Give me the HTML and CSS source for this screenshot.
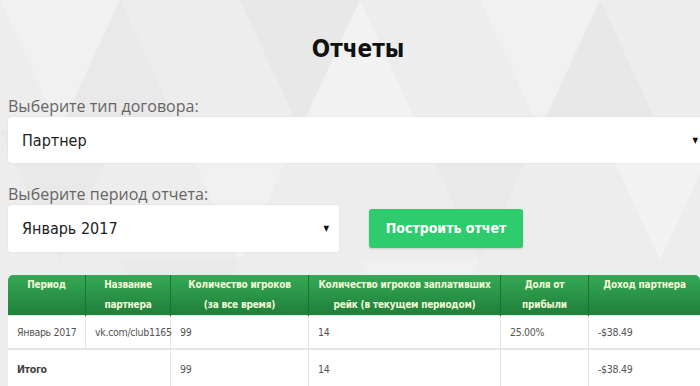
FILE: index.html
```html
<!DOCTYPE html>
<html lang="ru">
<head>
    <meta charset="UTF-8">
    <title>Отчеты</title>
    <link rel="stylesheet" href="styles.css">
</head>
<body>
    <svg class="bg" width="720" height="400" viewBox="0 0 720 400">
        <polygon points="0,0 120,0 60,130" fill="#f1f1f1"/>
        <polygon points="60,130 180,130 120,0" fill="#e9e9e9"/>
        <polygon points="240,0 360,0 300,130" fill="#e8e8e8"/>
        <polygon points="300,130 420,130 360,0" fill="#f2f2f2"/>
        <polygon points="480,0 600,0 540,130" fill="#f1f1f1"/>
        <polygon points="540,130 660,130 600,0" fill="#e8e8e8"/>
        <polygon points="0,130 120,130 60,260" fill="#e9e9e9"/>
        <polygon points="180,130 300,130 240,260" fill="#f1f1f1"/>
        <polygon points="420,130 540,130 480,260" fill="#e9e9e9"/>
        <polygon points="600,130 720,130 660,260" fill="#f2f2f2"/>
        <polygon points="120,260 240,260 180,400" fill="#e9e9e9"/>
        <polygon points="360,260 480,260 420,400" fill="#f1f1f1"/>
    </svg>
    <div class="page">
        <h1 class="title">Отчеты</h1>

        <label class="label">Выберите тип договора:</label>
        <div class="select wide">
            <span>Партнер</span>
            <span class="arrow">&#9660;</span>
        </div>

        <label class="label">Выберите период отчета:</label>
        <div class="period">
            <div class="select short">
                <span>Январь 2017</span>
                <span class="arrow">&#9660;</span>
            </div>
            <div class="btn">Построить отчет</div>
        </div>

        <table class="report">
            <thead>
                <tr>
                    <th class="c1">Период</th>
                    <th class="c2">Название партнера</th>
                    <th class="c3">Количество игроков<br>(за все время)</th>
                    <th class="c4">Количество игроков заплативших<br>рейк (в текущем периодом)</th>
                    <th class="c5">Доля от<br>прибыли</th>
                    <th class="c6">Доход партнера</th>
                </tr>
            </thead>
            <tbody>
                <tr>
                    <td>Январь 2017</td>
                    <td><div class="clip">vk.com/club11653</div></td>
                    <td>99</td>
                    <td>14</td>
                    <td>25.00%</td>
                    <td>-$38.49</td>
                </tr>
                <tr class="total">
                    <td colspan="2">Итого</td>
                    <td>99</td>
                    <td>14</td>
                    <td></td>
                    <td>-$38.49</td>
                </tr>
            </tbody>
        </table>
    </div>
</body>
</html>
```

FILE: styles.css
```css
html,body{
    margin: 0;
    padding: 0;
}
body{
    background: #ededed;
    overflow: hidden;
    font-family: "Open Sans", sans-serif;
    position: relative;
    height: 386px;
}
.bg{
    position: absolute;
    left: 0;
    top: 0;
    z-index: 0;
}
.page{
    position: relative;
    z-index: 1;
    width: 700px;
    margin-left: 8px;
    display: flex;
    flex-direction: column;
}
.title,
.select,
.btn,
.report{
    font-family: "DejaVu Sans", sans-serif;
    font-stretch: condensed;
}
.title{
    margin: 29px 0 0;
    height: 40px;
    line-height: 40px;
    text-align: center;
    font-weight: bold;
    font-size: 24px;
    color: #111;
}
.label{
    margin-top: 26px;
    font-size: 16px;
    line-height: 22px;
    color: #666;
}
.label + .select{
    margin-top: 0;
}
.select{
    background: #fff;
    border-radius: 3px;
    box-shadow: 0 0 2px rgba(0,0,0,0.08);
    display: flex;
    align-items: center;
    justify-content: space-between;
    padding: 0 10px 0 14px;
    font-size: 16px;
    color: #222;
}
.wide{
    height: 46px;
}
.short{
    width: 307px;
    height: 47px;
}
.arrow{
    font-size: 8px;
    color: #111;
}
.wide + .label{
    margin-top: 20px;
}
.period{
    margin-top: 0;
    display: flex;
    align-items: center;
    gap: 30px;
}
.btn{
    width: 154px;
    height: 39px;
    line-height: 39px;
    text-align: center;
    background: #2ecc6c;
    border-radius: 3px;
    box-shadow: 0 1px 2px rgba(0,0,0,0.15);
    color: #fff;
    font-weight: bold;
    font-size: 14px;
}
.report{
    margin-top: 23px;
    width: 692px;
    border-collapse: collapse;
    table-layout: fixed;
    background: #fff;
    font-size: 10.5px;
    letter-spacing: -0.3px;
    color: #555;
}
.report th{
    background: linear-gradient(#35a957, #1f7f39);
    color: #f3f8d6;
    font-weight: bold;
    font-size: 10px;
    letter-spacing: -0.2px;
    line-height: 20px;
    height: 40px;
    padding: 0 2px;
    vertical-align: top;
    border-left: 1px solid #1e7034;
    white-space: nowrap;
}
.report th.c2{
    white-space: normal;
}
.report th:first-child{
    border-left: none;
    border-top-left-radius: 5px;
}
.report th:last-child{
    border-top-right-radius: 5px;
}
.c1{ width: 73px; }
.c2{ width: 80px; }
.c3{ width: 133px; }
.c4{ width: 187px; }
.c5{ width: 83px; }
.report td{
    padding: 0 9px;
    height: 32px;
    border-left: 1px solid #e6e6e6;
    border-top: 1px solid #e6e6e6;
    white-space: nowrap;
}
.report td:first-child{
    border-left: none;
}
.report .total td{
    height: 38px;
    border-top: 2px solid #e6e6e6;
}
.report .total td:first-child{
    font-weight: bold;
    color: #444;
}
.clip{
    width: 77px;
    overflow: hidden;
}
```
